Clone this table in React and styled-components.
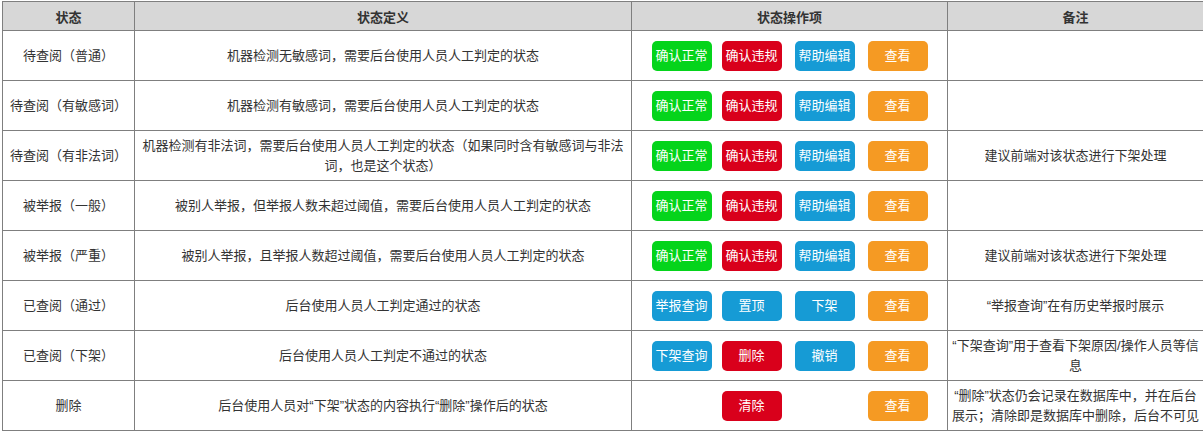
import React from 'react';
import styled, { createGlobalStyle } from 'styled-components';

const GlobalStyle = createGlobalStyle`
  body {
    margin: 0;
    background: #fff;
    font-family: 'Liberation Sans', 'Noto Sans CJK SC', sans-serif;
  }
`;

const Wrap = styled.div`
  padding: 1px 0 0 2px;
`;

const Table = styled.table`
  border-collapse: collapse;
  table-layout: fixed;
  width: 1201px;
  font-size: 13px;
  color: #333;
`;

const HeadCell = styled.th`
  height: 28px;
  padding: 0;
  background: #d7d7d7;
  border: 1px solid #7f7f7f;
  font-weight: bold;
  text-align: center;
`;

const Cell = styled.td`
  height: 49px;
  padding: 0 3px;
  border: 1px solid #7f7f7f;
  text-align: center;
  vertical-align: middle;
  line-height: 20px;
`;

// button slots sit at odd columns, spacer tracks between them
const Actions = styled.div`
  display: grid;
  grid-template-columns: 60px 10px 60px 13px 60px 13px 60px;
  justify-content: center;
`;

const COLORS = {
  green: '#04d41b',
  red: '#d9001b',
  blue: '#169bd5',
  orange: '#f59a23',
};

const Btn = styled.span`
  grid-column: ${p => p.$slot * 2 - 1};
  height: 30px;
  line-height: 30px;
  border-radius: 5px;
  background: ${p => COLORS[p.$color]};
  color: #fff;
  font-size: 13px;
  text-align: center;
  white-space: nowrap;
`;

const full = [['确认正常', 'green'], ['确认违规', 'red'], ['帮助编辑', 'blue'], ['查看', 'orange']];

const rows = [
  {
    state: '待查阅（普通）',
    def: '机器检测无敏感词，需要后台使用人员人工判定的状态',
    actions: full,
    note: '',
  },
  {
    state: '待查阅（有敏感词）',
    def: '机器检测有敏感词，需要后台使用人员人工判定的状态',
    actions: full,
    note: '',
  },
  {
    state: '待查阅（有非法词）',
    def: '机器检测有非法词，需要后台使用人员人工判定的状态（如果同时含有敏感词与非法词，也是这个状态）',
    actions: full,
    note: '建议前端对该状态进行下架处理',
  },
  {
    state: '被举报（一般）',
    def: '被别人举报，但举报人数未超过阈值，需要后台使用人员人工判定的状态',
    actions: full,
    note: '',
  },
  {
    state: '被举报（严重）',
    def: '被别人举报，且举报人数超过阈值，需要后台使用人员人工判定的状态',
    actions: full,
    note: '建议前端对该状态进行下架处理',
  },
  {
    state: '已查阅（通过）',
    def: '后台使用人员人工判定通过的状态',
    actions: [['举报查询', 'blue'], ['置顶', 'blue'], ['下架', 'blue'], ['查看', 'orange']],
    note: '“举报查询”在有历史举报时展示',
  },
  {
    state: '已查阅（下架）',
    def: '后台使用人员人工判定不通过的状态',
    actions: [['下架查询', 'blue'], ['删除', 'red'], ['撤销', 'blue'], ['查看', 'orange']],
    note: '“下架查询”用于查看下架原因/操作人员等信息',
  },
  {
    state: '删除',
    def: '后台使用人员对“下架”状态的内容执行“删除”操作后的状态',
    actions: [null, ['清除', 'red'], null, ['查看', 'orange']],
    note: '“删除”状态仍会记录在数据库中，并在后台展示；清除即是数据库中删除，后台不可见',
  },
];

export default function App() {
  return (
    <Wrap>
      <GlobalStyle />
      <Table>
        <colgroup>
          <col style={{ width: 132 }} />
          <col style={{ width: 497 }} />
          <col style={{ width: 316 }} />
          <col style={{ width: 256 }} />
        </colgroup>
        <thead>
          <tr>
            <HeadCell>状态</HeadCell>
            <HeadCell>状态定义</HeadCell>
            <HeadCell>状态操作项</HeadCell>
            <HeadCell>备注</HeadCell>
          </tr>
        </thead>
        <tbody>
          {rows.map((r, i) => (
            <tr key={i}>
              <Cell>{r.state}</Cell>
              <Cell>{r.def}</Cell>
              <Cell>
                <Actions>
                  {r.actions.map((a, j) =>
                    a ? (
                      <Btn key={j} $slot={j + 1} $color={a[1]}>
                        {a[0]}
                      </Btn>
                    ) : null
                  )}
                </Actions>
              </Cell>
              <Cell>{r.note}</Cell>
            </tr>
          ))}
        </tbody>
      </Table>
    </Wrap>
  );
}
